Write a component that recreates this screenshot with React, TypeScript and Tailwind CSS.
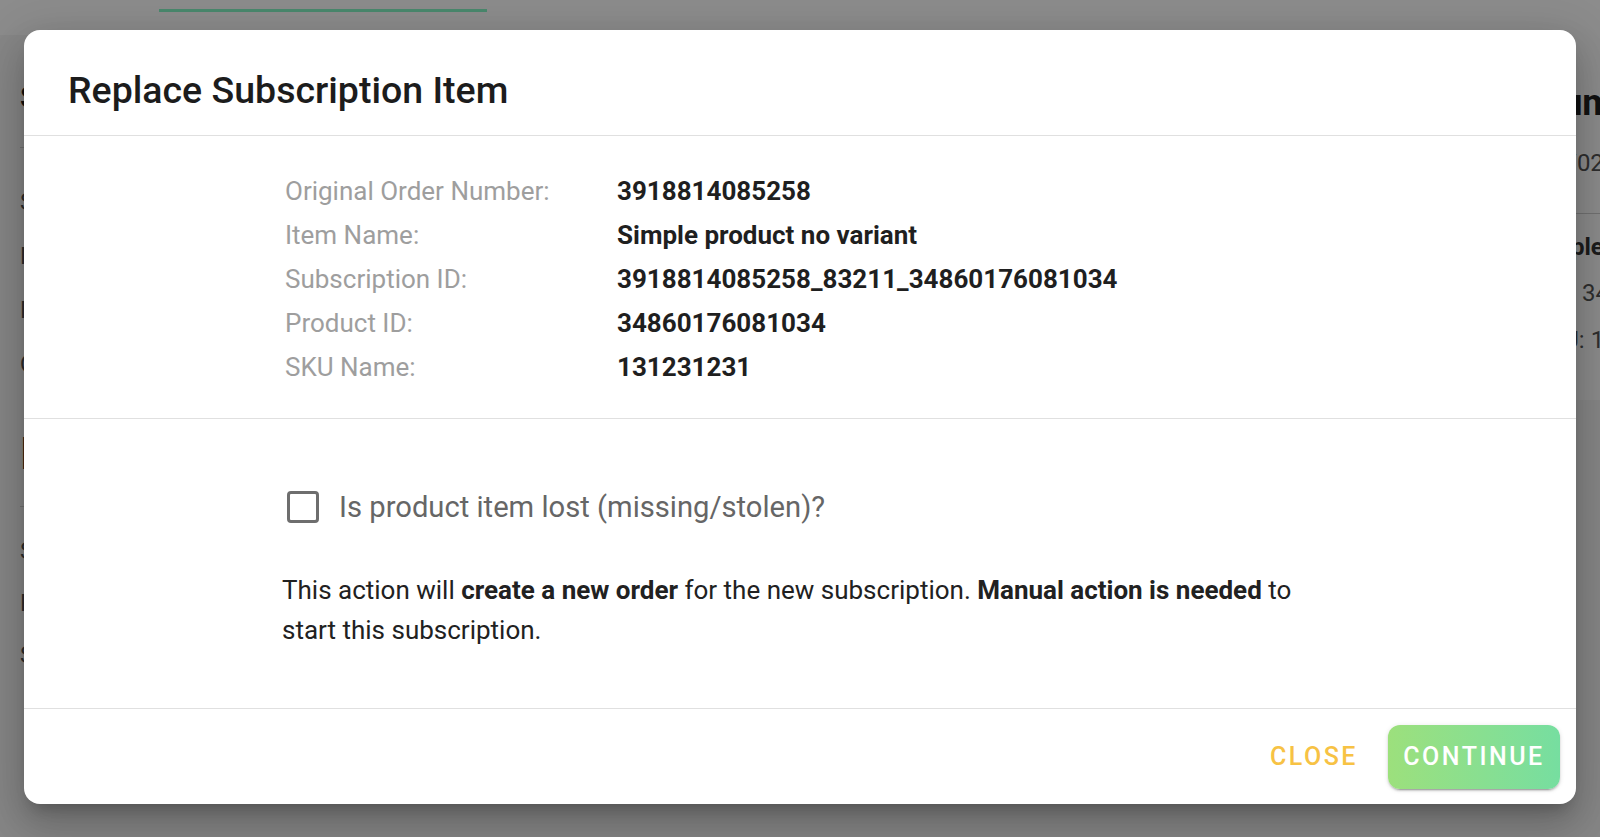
import React from "react";

const details = [
  { label: "Original Order Number:", value: "3918814085258" },
  { label: "Item Name:", value: "Simple product no variant" },
  { label: "Subscription ID:", value: "3918814085258_83211_34860176081034" },
  { label: "Product ID:", value: "34860176081034" },
  { label: "SKU Name:", value: "131231231" },
];

function PageBehind() {
  return (
    <div className="flex h-full flex-col bg-[#f6f6f6]">
      <div className="h-[35px] bg-white">
        <div className="ml-[159px] mt-[9px] h-[3px] w-[328px] bg-[#86f7c6]" />
      </div>
      <div className="flex flex-1">
        <div className="w-[700px] pl-[20px]">
          <div className="mt-[42px] text-[32px] font-bold leading-[40px] text-[#222]">
            Subscription details
          </div>
          <div className="mt-[30px] border-t border-[#cfcfcf]" />
          <div className="mt-[34px] flex flex-col gap-[14px] text-[24px] leading-[40px] text-[#555]">
            <div>Status: Active</div>
            <div>Next billing: 12/02/2023</div>
            <div>Frequency: Monthly</div>
            <div>Quantity: 1</div>
          </div>
          <div className="mt-[46px] text-[44px] font-bold leading-[48px] text-[#222]">
            Items
          </div>
          <div className="mt-[28px] border-t border-[#cfcfcf]" />
          <div className="mt-[24px] flex flex-col gap-[12px] text-[24px] leading-[40px] text-[#555]">
            <div>Simple product no variant</div>
            <div>Product ID: 34860176081034</div>
            <div>SKU: 131231231</div>
          </div>
        </div>
        <div className="ml-auto h-[365px] w-[71px] overflow-hidden whitespace-nowrap bg-white">
          <div className="mt-[46px] pl-[11px] text-[36px] font-bold leading-[44px] text-[#222]">
            Summary
          </div>
          <div className="mt-[20px] pl-[11px] text-[24px] leading-[36px] text-[#555]">
            12/02/2023
          </div>
          <div className="mt-[32px] border-t border-[#cfcfcf]" />
          <div className="mt-[15px] text-[24px] font-bold leading-[36px] text-[#333]">
            Simple product no variant
          </div>
          <div className="mt-[10px] pl-[19px] text-[24px] leading-[36px] text-[#555]">
            ID: 34860176081034
          </div>
          <div className="mt-[11px] pl-[5px] text-[24px] leading-[36px] text-[#555]">
            SKU: 131231231
          </div>
        </div>
      </div>
    </div>
  );
}

export default function App() {
  return (
    <div className="relative h-[837px] w-full overflow-hidden font-['Roboto',sans-serif]">
      <PageBehind />

      <div className="absolute inset-0 flex items-start justify-center bg-black/45 pt-[30px]">
        <div className="w-[1552px] overflow-hidden rounded-2xl bg-white shadow-[0_11px_15px_-7px_rgba(0,0,0,0.2),0_24px_38px_3px_rgba(0,0,0,0.14),0_9px_46px_8px_rgba(0,0,0,0.12)]">
          {/* header */}
          <div className="flex h-[106px] items-center border-b border-[#e0e0e0] px-[44px] pt-[15px]">
            <h2 className="text-[37.5px] font-medium leading-normal text-[#1c1c1c]">
              Replace Subscription Item
            </h2>
          </div>

          {/* item details */}
          <div className="border-b border-[#e0e0e0] pb-[29px] pt-[33px]">
            <div className="mx-auto w-[1036px]">
              {details.map((d) => (
                <div key={d.label} className="grid grid-cols-[335px_1fr] text-[26px] leading-[44px]">
                  <span className="pl-[3px] text-[#9e9e9e]">{d.label}</span>
                  <span className="font-bold text-[#1f1f1f]">{d.value}</span>
                </div>
              ))}
            </div>
          </div>

          {/* lost checkbox + note */}
          <div className="border-b border-[#e0e0e0] pb-[58px] pt-[68px]">
            <div className="mx-auto w-[1036px]">
              <label className="flex h-[40px] items-center">
                <span className="ml-[5px] h-[32px] w-[32px] rounded-[4px] border-[3px] border-[#6e6e6e]" />
                <span className="ml-[20px] text-[29.2px] leading-[40px] text-[#666]">
                  Is product item lost (missing/stolen)?
                </span>
              </label>
              <p className="mt-[43px] text-[26px] leading-[40px] text-[#212121]">
                This action will <b className="font-bold">create a new order</b> for the new
                subscription. <b className="font-bold">Manual action is needed</b> to start this
                subscription.
              </p>
            </div>
          </div>

          {/* actions */}
          <div className="flex h-[95px] items-center justify-end gap-[14px] pr-[16px]">
            <button className="px-[16px] text-[25px] font-medium uppercase tracking-[0.1em] text-[#f7c244]">
              Close
            </button>
            <button className="flex h-[64px] w-[172px] items-center justify-center rounded-[12px] bg-gradient-to-r from-[#9ce07c] to-[#76dea0] text-[25px] font-medium uppercase tracking-[0.1em] text-white shadow-[0_3px_1px_-2px_rgba(0,0,0,0.2),0_2px_2px_0_rgba(0,0,0,0.14),0_1px_5px_0_rgba(0,0,0,0.12)]">
              Continue
            </button>
          </div>
        </div>
      </div>
    </div>
  );
}
